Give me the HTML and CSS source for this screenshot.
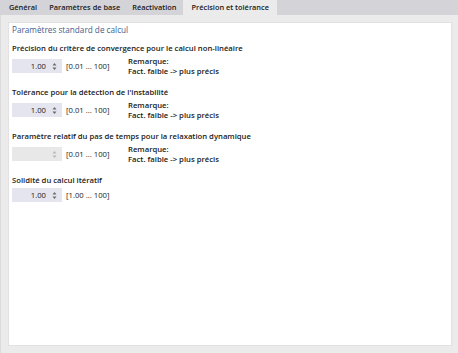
FILE: index.html
```html
<!DOCTYPE html>
<html lang="fr">
<head>
  <meta charset="UTF-8">
  <title>Précision et tolérance</title>
  <link rel="stylesheet" href="styles.css">
</head>
<body>

<div class="tabs">
  <div class="tab">Général</div>
  <div class="tab">Paramètres de base</div>
  <div class="tab">Réactivation</div>
  <div class="tab active">Précision et tolérance</div>
</div>

<div class="content">
  <div class="panel">
    <div class="section-title">Paramètres standard de calcul</div>

    <div class="group">
      <div class="label">Précision du critère de convergence pour le calcul non-linéaire</div>
      <div class="row">
        <div class="spin"><span class="val">1.00</span><svg class="arrows" width="5" height="9" viewBox="0 0 5 9"><path d="M0.5 3.5 L2.5 1 L4.5 3.5 Z M0.5 5.5 L2.5 8 L4.5 5.5 Z" fill="#6b6b6b"/></svg></div>
        <span class="range">[0.01 ... 100]</span>
        <div class="note">Remarque:<br>Fact. faible -&gt; plus précis</div>
      </div>
    </div>

    <div class="group">
      <div class="label">Tolérance pour la détection de l'instabilité</div>
      <div class="row">
        <div class="spin"><span class="val">1.00</span><svg class="arrows" width="5" height="9" viewBox="0 0 5 9"><path d="M0.5 3.5 L2.5 1 L4.5 3.5 Z M0.5 5.5 L2.5 8 L4.5 5.5 Z" fill="#6b6b6b"/></svg></div>
        <span class="range">[0.01 ... 100]</span>
        <div class="note">Remarque:<br>Fact. faible -&gt; plus précis</div>
      </div>
    </div>

    <div class="group">
      <div class="label">Paramètre relatif du pas de temps pour la relaxation dynamique</div>
      <div class="row">
        <div class="spin disabled"><span class="val"></span><svg class="arrows" width="5" height="9" viewBox="0 0 5 9"><path d="M0.5 3.5 L2.5 1 L4.5 3.5 Z M0.5 5.5 L2.5 8 L4.5 5.5 Z" fill="#b8b8b8"/></svg></div>
        <span class="range">[0.01 ... 100]</span>
        <div class="note">Remarque:<br>Fact. faible -&gt; plus précis</div>
      </div>
    </div>

    <div class="group">
      <div class="label">Solidité du calcul itératif</div>
      <div class="row">
        <div class="spin"><span class="val">1.00</span><svg class="arrows" width="5" height="9" viewBox="0 0 5 9"><path d="M0.5 3.5 L2.5 1 L4.5 3.5 Z M0.5 5.5 L2.5 8 L4.5 5.5 Z" fill="#6b6b6b"/></svg></div>
        <span class="range">[1.00 ... 100]</span>
      </div>
    </div>
  </div>
</div>

</body>
</html>
```

FILE: styles.css
```css
html, body {
  margin: 0;
  height: 100%;
}
body {
  font-family: 'Open Sans', 'Noto Sans', sans-serif;
  font-size: 7.7px;
  font-weight: 600;
  color: #1a1a1a;
  background: #ebebeb;
  display: flex;
  flex-direction: column;
}
.tabs {
  display: flex;
  height: 15px;
  background: #d4d3d8;
  flex-shrink: 0;
}
.tab {
  padding: 0 6px;
  line-height: 15px;
  font-size: 7.4px;
  color: #1a1a1a;
}
.tab:first-child {
  padding-left: 9px;
}
.tab.active {
  background: #ebebeb;
  padding: 0 8px 0 9px;
}
.content {
  flex: 1;
  padding: 7px 6px 7px 7px;
  border-left: 1px solid #dcdcdc;
  display: flex;
}
.panel {
  flex: 1;
  background: #fff;
  border: 1px solid #e2e2e2;
  padding: 0 3px;
}
.section-title {
  color: #3f5d8e;
  font-size: 8.2px;
  font-weight: 400;
  line-height: 12px;
  margin-top: 1px;
}
.group {
  margin-top: 6px;
}
.group + .group {
  margin-top: 10px;
}
.label {
  line-height: 12px;
}
.row {
  display: flex;
  align-items: center;
  margin-top: 2px;
}
.spin {
  width: 50px;
  height: 14px;
  background: #e5e5ef;
  display: flex;
  align-items: center;
  justify-content: flex-end;
  box-sizing: border-box;
  padding-right: 5px;
  font-weight: 400;
}
.spin.disabled {
  background: #e8e8e8;
}
.val {
  margin-right: 6px;
}
.arrows {
  display: block;
}
.range {
  margin-left: 4px;
  width: 60px;
  font-weight: 400;
}
.note {
  margin-left: 2px;
  line-height: 10px;
}
```
